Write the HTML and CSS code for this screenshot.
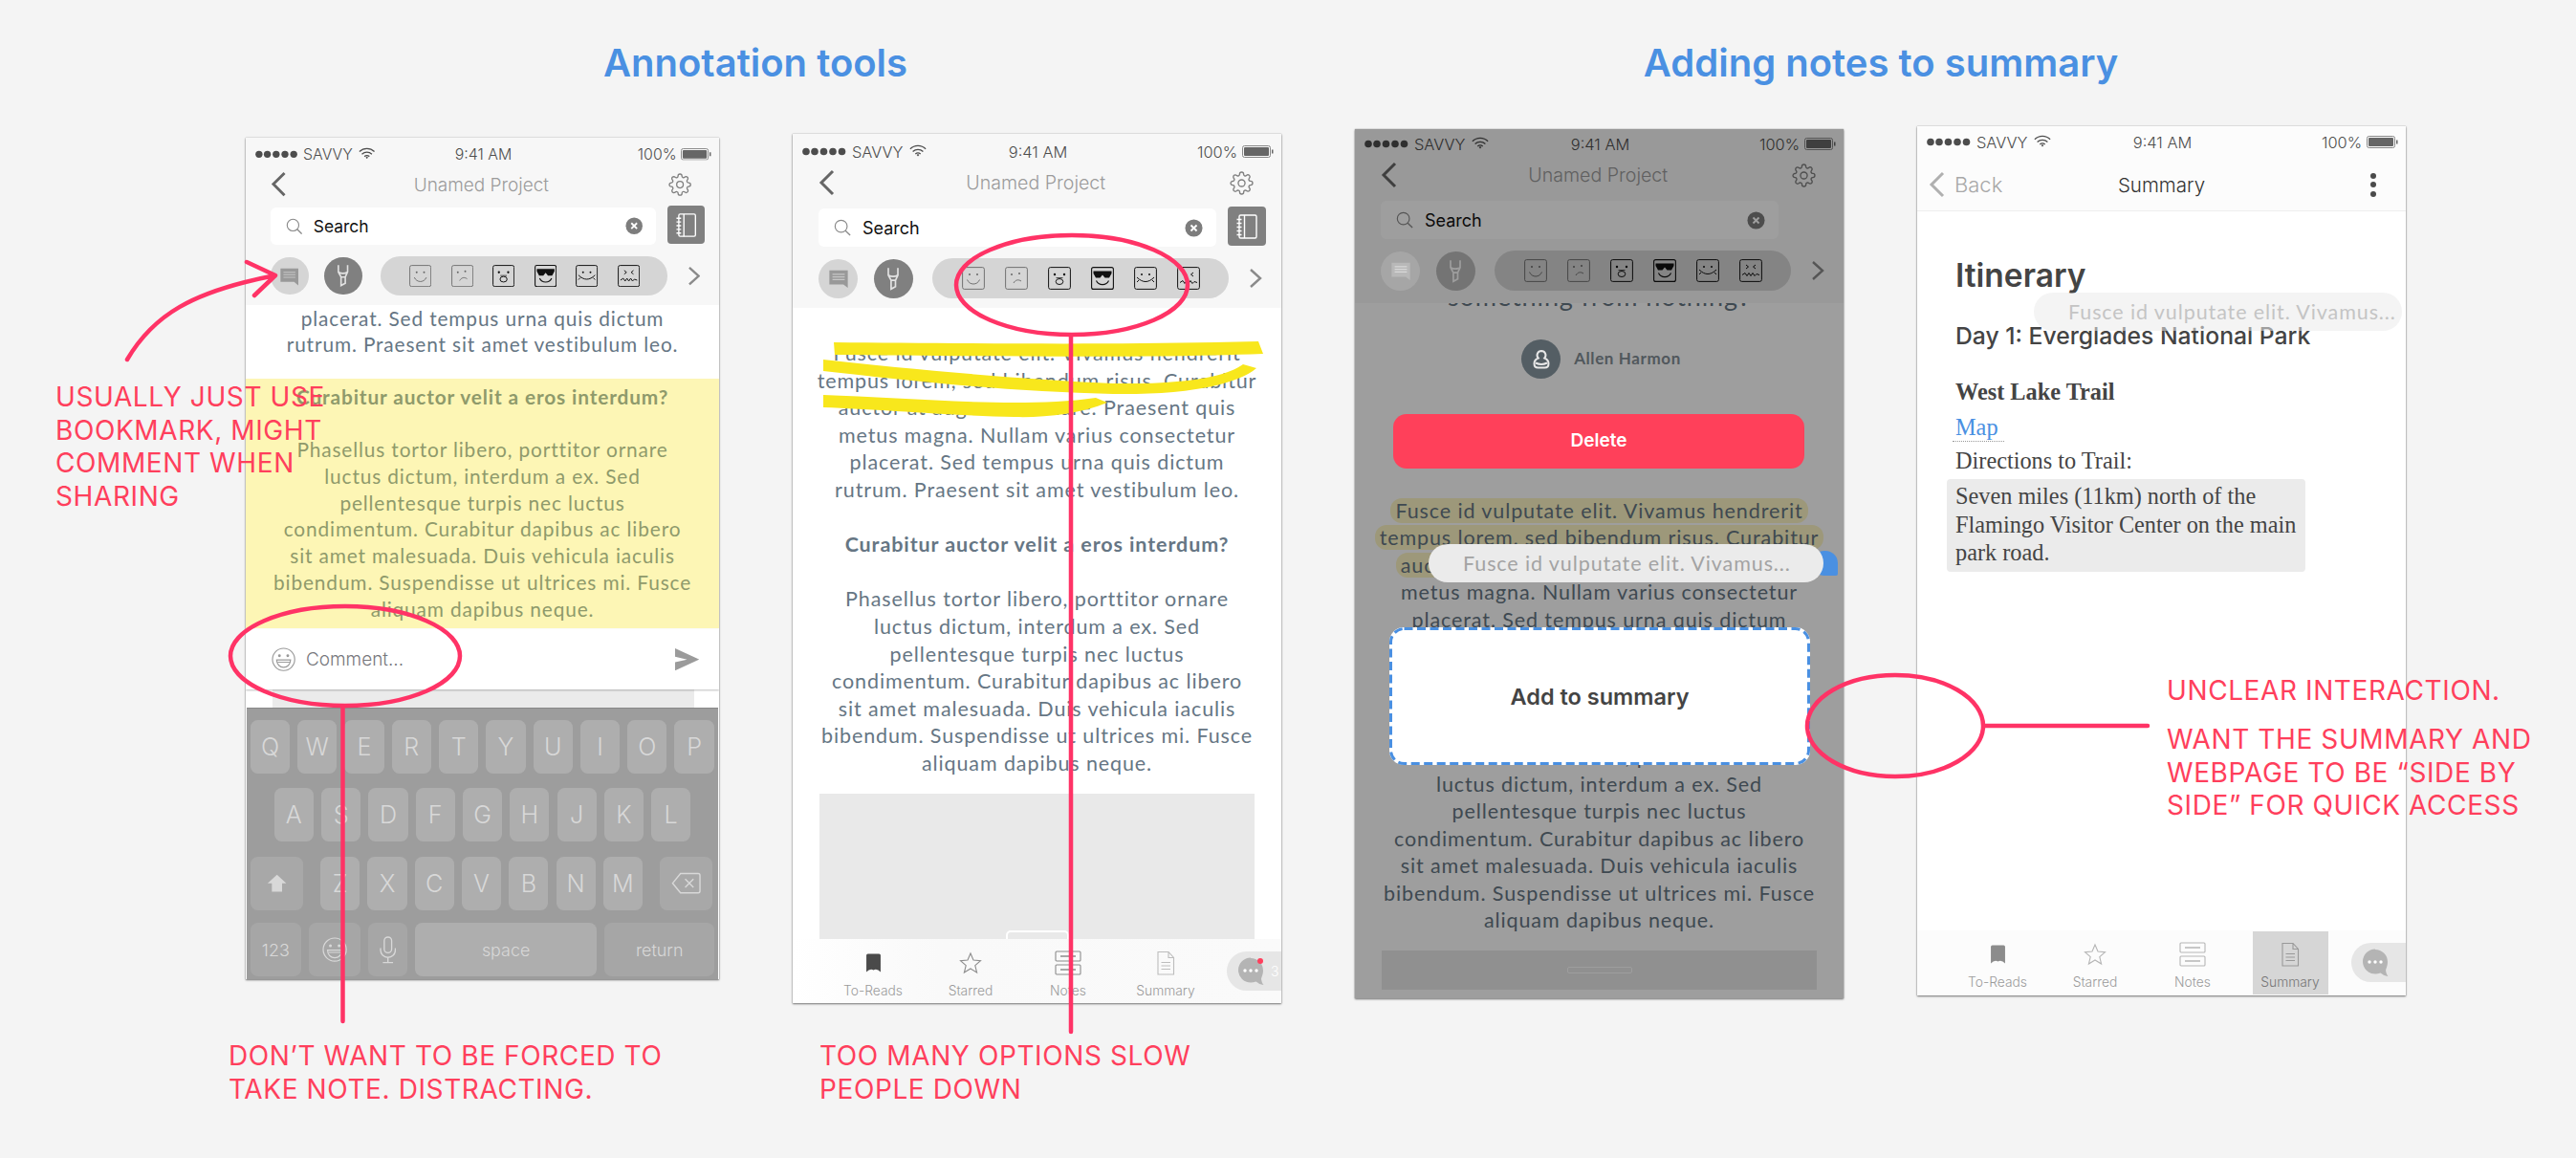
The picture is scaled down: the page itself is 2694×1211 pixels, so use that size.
FILE: index.html
```html
<!DOCTYPE html>
<html lang="en">
<head>
    <meta charset="UTF-8">
    <title>Annotation tools and adding notes to summary</title>
    <link rel="stylesheet" href="styles.css">
</head>
<body>

    <!-- icon sprite -->
    <svg class="sprite" xmlns="http://www.w3.org/2000/svg">
        <symbol id="i-dots" viewBox="0 0 46 9"><circle cx="4" cy="4.5" r="3.8"/><circle cx="13" cy="4.5" r="3.8"/><circle cx="22.5" cy="4.5" r="3.8"/><circle cx="32" cy="4.5" r="3.8"/><circle cx="41.5" cy="4.5" r="3.8"/></symbol>
        <symbol id="i-wifi" viewBox="0 0 20 14"><path d="M1 5c5-5 13-5 18 0M4 8c3.500-3 8.500-3 12 0M7 10.800c2-1.500 4-1.500 6 0" fill="none" stroke="currentColor" stroke-width="1.500"/><path d="M8.500 12l1.500-1 1.500 1-1.500 1.600z"/></symbol>
        <symbol id="i-battery" viewBox="0 0 33 13"><rect x=".5" y=".5" width="29" height="12" rx="2" fill="none" stroke="currentColor"/><rect x="2" y="2" width="26" height="9" rx="1"/><path d="M31 4.500h1.500v4H31z"/></symbol>
        <symbol id="i-back" viewBox="0 0 18 28"><path d="M15 2L3 14l12 12" fill="none" stroke="currentColor" stroke-width="3"/></symbol>
        <symbol id="i-next" viewBox="0 0 14 22"><path d="M2 2l10 9-10 9" fill="none" stroke="currentColor" stroke-width="2.400"/></symbol>
        <symbol id="i-gear" viewBox="0 0 24 24"><g fill="none" stroke="currentColor" stroke-width="1.300"><circle cx="12" cy="12" r="3.400"/><path d="M19.400 15a1.650 1.650 0 0 0 .33 1.820l.06.06a2 2 0 0 1 0 2.830 2 2 0 0 1-2.830 0l-.06-.06a1.650 1.650 0 0 0-1.820-.33 1.650 1.650 0 0 0-1 1.510V21a2 2 0 0 1-2 2 2 2 0 0 1-2-2v-.09A1.650 1.650 0 0 0 9 19.400a1.650 1.650 0 0 0-1.820.33l-.06.06a2 2 0 0 1-2.830 0 2 2 0 0 1 0-2.830l.06-.06a1.650 1.650 0 0 0 .33-1.820 1.650 1.650 0 0 0-1.510-1H3a2 2 0 0 1-2-2 2 2 0 0 1 2-2h.09A1.650 1.650 0 0 0 4.600 9a1.650 1.650 0 0 0-.33-1.820l-.06-.06a2 2 0 0 1 0-2.830 2 2 0 0 1 2.830 0l.06.06a1.650 1.650 0 0 0 1.820.33H9a1.650 1.650 0 0 0 1-1.510V3a2 2 0 0 1 2-2 2 2 0 0 1 2 2v.09a1.650 1.650 0 0 0 1 1.510 1.650 1.650 0 0 0 1.820-.33l.06-.06a2 2 0 0 1 2.830 0 2 2 0 0 1 0 2.830l-.06.06a1.650 1.650 0 0 0-.33 1.820V9a1.650 1.650 0 0 0 1.510 1H21a2 2 0 0 1 2 2 2 2 0 0 1-2 2h-.09a1.650 1.650 0 0 0-1.510 1z"/></g></symbol>
        <symbol id="i-search" viewBox="0 0 20 20"><circle cx="8.500" cy="8.500" r="7" fill="none" stroke="currentColor" stroke-width="1.300"/><path d="M13.500 13.500l5.500 5.500" fill="none" stroke="currentColor" stroke-width="1.500"/></symbol>
        <symbol id="i-clear" viewBox="0 0 20 20"><circle cx="10" cy="10" r="9.500"/><path d="M6.800 6.800l6.400 6.400M13.200 6.800l-6.400 6.400" stroke="#fff" stroke-width="2"/></symbol>
        <symbol id="i-notebook" viewBox="0 0 24 28"><g fill="none" stroke="currentColor" stroke-width="1.400"><rect x="4" y="2" width="18" height="24" rx="1.500"/><path d="M9.500 2v24M1.500 6.500h5M1.500 10.500h5M1.500 14.500h5M1.500 18.500h5M1.500 22.500h5"/></g></symbol>
        <symbol id="i-comment" viewBox="0 0 24 24"><path d="M1.500 3h21v20l-5-4h-16z"/><path d="M5 7.500h14M5 10.500h14M5 13.500h14" stroke="#fff" stroke-opacity=".45" stroke-width="1.200"/></symbol>
        <symbol id="i-marker" viewBox="0 0 24 30"><path d="M6 1.500v9l3.500 6.500v11l5.500-3v-8l3-6.500v-9M6 10.500c3.500 2 8.500 2 12 0M9.500 17h5.500" fill="none" stroke="currentColor" stroke-width="2"/></symbol>
        <symbol id="i-face1" viewBox="0 0 24 24"><g fill="none" stroke="currentColor" stroke-width=".9"><rect x=".6" y=".6" width="22.800" height="22.800" rx="2"/><path d="M5.500 13.500c2.500 6 10.500 6 13 0"/></g><circle cx="8" cy="8" r="1" fill="currentColor"/><circle cx="16" cy="8" r="1" fill="currentColor"/></symbol>
        <symbol id="i-face2" viewBox="0 0 24 24"><g fill="none" stroke="currentColor" stroke-width=".9"><rect x=".6" y=".6" width="22.800" height="22.800" rx="2"/><path d="M9 17c2-3.500 5-4 8-2"/></g><circle cx="7" cy="8" r="1" fill="currentColor"/><circle cx="15" cy="7" r="1" fill="currentColor"/></symbol>
        <symbol id="i-face3" viewBox="0 0 24 24"><g fill="none" stroke="currentColor" stroke-width="1"><rect x=".6" y=".6" width="22.800" height="22.800" rx="2"/><ellipse cx="12" cy="15.500" rx="3.800" ry="3"/><path d="M8.500 11.500h7" stroke-width=".7"/></g><circle cx="7" cy="8" r="1.200" fill="currentColor"/><circle cx="17" cy="8" r="1.200" fill="currentColor"/></symbol>
        <symbol id="i-face4" viewBox="0 0 24 24"><rect x=".6" y=".6" width="22.800" height="22.800" rx="2" fill="none" stroke="currentColor" stroke-width="1.100"/><path d="M2.500 4.500h19v2.500l-2.500 4.500h-4.500l-2.500-3-2.500 3h-4.500l-2.500-4.500z"/><path d="M5.500 14.500c2.500 5.500 10.500 5.500 13 0" fill="none" stroke="currentColor" stroke-width="1.100"/></symbol>
        <symbol id="i-face5" viewBox="0 0 24 24"><g fill="none" stroke="currentColor" stroke-width="1"><rect x=".6" y=".6" width="22.800" height="22.800" rx="2"/><path d="M3 11c3 3 6 4.500 9 4.500s6-1.500 9-4.500M5 14l-2 2M19 14l2 2"/></g><circle cx="8" cy="8" r="1" fill="currentColor"/><circle cx="16" cy="8" r="1" fill="currentColor"/></symbol>
        <symbol id="i-face6" viewBox="0 0 24 24"><g fill="none" stroke="currentColor" stroke-width="1"><rect x=".6" y=".6" width="22.800" height="22.800" rx="2"/><path d="M3 16.500l3-2 2 3 2-3 2 3 2-3 2 3 2-2 3 1M7 6l2.500 2-2.500 2M17 6l-2.500 2 2.500 2"/></g></symbol>
        <symbol id="i-emoji" viewBox="0 0 26 26"><circle cx="13" cy="13" r="12" fill="none" stroke="currentColor" stroke-width="1.200"/><circle cx="8.500" cy="9" r="1.500"/><circle cx="17.500" cy="9" r="1.500"/><path d="M5.500 13.500h15c0 5-3.500 8-7.500 8s-7.500-3-7.500-8z" fill="none" stroke="currentColor" stroke-width="1.200"/><path d="M6.500 16h13" stroke="currentColor"/></symbol>
        <symbol id="i-send" viewBox="0 0 26 24"><path d="M0 0l26 12L0 24v-9l13-3L0 9z"/></symbol>
        <symbol id="i-bookmark" viewBox="0 0 16 20"><path d="M1 2.500Q1 1 2.500 1h11Q15 1 15 2.500V19q-3.500-4-7-2-3.500-2-7 2z"/></symbol>
        <symbol id="i-star" viewBox="0 0 24 24"><path d="M12 2l3 7 7.500.6-5.700 5 1.800 7.400-6.600-4-6.600 4 1.800-7.400-5.700-5L9 9z" fill="none" stroke="currentColor" stroke-width="1.100"/></symbol>
        <symbol id="i-notes" viewBox="0 0 28 28"><g fill="none" stroke="currentColor" stroke-width="1.100"><rect x="1" y="2" width="26" height="10" rx="1"/><rect x="1" y="16" width="26" height="10" rx="1"/><path d="M6 7h16M6 21h16" stroke-width="1.600"/></g></symbol>
        <symbol id="i-doc" viewBox="0 0 20 26"><path d="M2 1.500h11l5.500 6V25H2zM13 1.500v6h5.500M5.500 12.500h9.500M5.500 16h9.500M5.500 19.500h9.500" fill="none" stroke="currentColor" stroke-width="1.100"/></symbol>
        <symbol id="i-chat" viewBox="0 0 28 30"><path d="M14 1a13 13 0 0 1 13 13c0 4-1.500 6.500-2 8.500.2 2.500 1.200 5 2.500 6.500-3.500-.5-6-2-8-3.500-1.700.7-3.500 1-5.500 1a13 13 0 0 1 0-26z"/><circle cx="8" cy="14" r="1.700" fill="#fff"/><circle cx="14" cy="14" r="1.700" fill="#fff"/><circle cx="20" cy="14" r="1.700" fill="#fff"/></symbol>
        <symbol id="i-person" viewBox="0 0 24 24"><path d="M12 3a4.500 4.500 0 0 1 3.300 7.500c2.500 1 4.200 3.200 4.200 5.800 0 2.700-1.800 4.200-4 4.200h-7c-2.200 0-4-1.500-4-4.200 0-2.600 1.700-4.800 4.200-5.800A4.500 4.500 0 0 1 12 3z" fill="none" stroke="currentColor" stroke-width="2"/><path d="M6 15.500c4 2 8 2 12 0" fill="none" stroke="currentColor" stroke-width="2"/></symbol>
        <symbol id="i-shift" viewBox="0 0 24 24"><path d="M12 2l11 10h-5v10H6V12H1z"/></symbol>
        <symbol id="i-del" viewBox="0 0 32 24"><path d="M10 1.500h19a2 2 0 0 1 2 2v17a2 2 0 0 1-2 2H10L1.500 12zM15 7.500l9 9M24 7.500l-9 9" fill="none" stroke="currentColor" stroke-width="1.500"/></symbol>
        <symbol id="i-mic" viewBox="0 0 18 30"><rect x="5" y="1" width="8" height="17" rx="4" fill="none" stroke="currentColor" stroke-width="1.400"/><path d="M1 13v2a8 8 0 0 0 16 0v-2M9 23v5M3.500 28.500h11" fill="none" stroke="currentColor" stroke-width="1.400"/></symbol>
    </svg>

    <h1 class="section-title title-a">Annotation tools</h1>
    <h1 class="section-title title-b">Adding notes to summary</h1>

    <!-- Phone 1: comment box with keyboard -->
    <section class="phone phone-keyboard">
        <header class="head">
            <div class="status">
                <div class="carrier"><svg class="dots"><use href="#i-dots"/></svg>SAVVY<svg class="wifi"><use href="#i-wifi"/></svg></div>
                <div class="clock">9:41 AM</div>
                <div class="power">100%<svg class="battery"><use href="#i-battery"/></svg></div>
            </div>
            <div class="nav">
                <svg class="back"><use href="#i-back"/></svg>
                <div class="nav-title">Unamed Project</div>
                <svg class="gear"><use href="#i-gear"/></svg>
            </div>
            <div class="search-row">
                <div class="search"><svg class="search-icon"><use href="#i-search"/></svg><span class="search-text">Search</span><svg class="clear"><use href="#i-clear"/></svg></div>
                <div class="notebook"><svg><use href="#i-notebook"/></svg></div>
            </div>
            <div class="tools">
                <div class="tool tool-comment"><svg><use href="#i-comment"/></svg></div>
                <div class="tool tool-marker"><svg><use href="#i-marker"/></svg></div>
                <div class="faces">
                    <svg class="face soft"><use href="#i-face1"/></svg>
                    <svg class="face soft"><use href="#i-face2"/></svg>
                    <svg class="face"><use href="#i-face3"/></svg>
                    <svg class="face"><use href="#i-face4"/></svg>
                    <svg class="face"><use href="#i-face5"/></svg>
                    <svg class="face"><use href="#i-face6"/></svg>
                </div>
                <svg class="next"><use href="#i-next"/></svg>
            </div>
        </header>
        <div class="article article-cut">
            placerat. Sed tempus urna quis dictum<br>
            rutrum. Praesent sit amet vestibulum leo.
            <div class="highlighted">
                <strong>Curabitur auctor velit a eros interdum?</strong><br><br>
                Phasellus tortor libero, porttitor ornare<br>
                luctus dictum, interdum a ex. Sed<br>
                pellentesque turpis nec luctus<br>
                condimentum. Curabitur dapibus ac libero<br>
                sit amet malesuada. Duis vehicula iaculis<br>
                bibendum. Suspendisse ut ultrices mi. Fusce<br>
                aliquam dapibus neque.
            </div>
        </div>
        <div class="comment-bar">
            <svg class="comment-emoji"><use href="#i-emoji"/></svg>
            <span class="comment-text">Comment...</span>
            <svg class="send"><use href="#i-send"/></svg>
        </div>
        <div class="comment-gap"><div></div></div>
        <div class="keyboard">
            <div class="key-row">
                <div class="key">Q</div><div class="key">W</div><div class="key">E</div><div class="key">R</div><div class="key">T</div><div class="key">Y</div><div class="key">U</div><div class="key">I</div><div class="key">O</div><div class="key">P</div>
            </div>
            <div class="key-row row-center">
                <div class="key">A</div><div class="key">S</div><div class="key">D</div><div class="key">F</div><div class="key">G</div><div class="key">H</div><div class="key">J</div><div class="key">K</div><div class="key">L</div>
            </div>
            <div class="key-row">
                <div class="key key-shift"><svg><use href="#i-shift"/></svg></div>
                <div class="key">Z</div><div class="key">X</div><div class="key">C</div><div class="key">V</div><div class="key">B</div><div class="key">N</div><div class="key">M</div>
                <div class="key key-del"><svg><use href="#i-del"/></svg></div>
            </div>
            <div class="key-row row-last">
                <div class="key key-small k123">123</div>
                <div class="key kemoji"><svg><use href="#i-emoji"/></svg></div>
                <div class="key kmic"><svg><use href="#i-mic"/></svg></div>
                <div class="key key-small kspace">space</div>
                <div class="key key-small kreturn">return</div>
            </div>
        </div>
    </section>

    <!-- Phone 2: highlight by scribble -->
    <section class="phone phone-read">
        <header class="head">
            <div class="status">
                <div class="carrier"><svg class="dots"><use href="#i-dots"/></svg>SAVVY<svg class="wifi"><use href="#i-wifi"/></svg></div>
                <div class="clock">9:41 AM</div>
                <div class="power">100%<svg class="battery"><use href="#i-battery"/></svg></div>
            </div>
            <div class="nav">
                <svg class="back"><use href="#i-back"/></svg>
                <div class="nav-title">Unamed Project</div>
                <svg class="gear"><use href="#i-gear"/></svg>
            </div>
            <div class="search-row">
                <div class="search"><svg class="search-icon"><use href="#i-search"/></svg><span class="search-text">Search</span><svg class="clear"><use href="#i-clear"/></svg></div>
                <div class="notebook"><svg><use href="#i-notebook"/></svg></div>
            </div>
            <div class="tools">
                <div class="tool tool-comment"><svg><use href="#i-comment"/></svg></div>
                <div class="tool tool-marker"><svg><use href="#i-marker"/></svg></div>
                <div class="faces">
                    <svg class="face soft"><use href="#i-face1"/></svg>
                    <svg class="face soft"><use href="#i-face2"/></svg>
                    <svg class="face"><use href="#i-face3"/></svg>
                    <svg class="face"><use href="#i-face4"/></svg>
                    <svg class="face"><use href="#i-face5"/></svg>
                    <svg class="face"><use href="#i-face6"/></svg>
                </div>
                <svg class="next"><use href="#i-next"/></svg>
            </div>
        </header>
        <div class="article article-top">
            Fusce id vulputate elit. Vivamus hendrerit<br>
            tempus lorem, sed bibendum risus. Curabitur<br>
            auctor at augue eu ornare. Praesent quis<br>
            metus magna. Nullam varius consectetur<br>
            placerat. Sed tempus urna quis dictum<br>
            rutrum. Praesent sit amet vestibulum leo.<br><br>
            <strong>Curabitur auctor velit a eros interdum?</strong><br><br>
            Phasellus tortor libero, porttitor ornare<br>
            luctus dictum, interdum a ex. Sed<br>
            pellentesque turpis nec luctus<br>
            condimentum. Curabitur dapibus ac libero<br>
            sit amet malesuada. Duis vehicula iaculis<br>
            bibendum. Suspendisse ut ultrices mi. Fusce<br>
            aliquam dapibus neque.
            <div class="picture"><div class="picture-chip"></div></div>
        </div>
        <footer class="tabbar">
            <div class="tab tab-on"><svg class="tab-bookmark"><use href="#i-bookmark"/></svg><span>To-Reads</span></div>
            <div class="tab"><svg class="tab-star"><use href="#i-star"/></svg><span>Starred</span></div>
            <div class="tab"><svg class="tab-notes"><use href="#i-notes"/></svg><span>Notes</span></div>
            <div class="tab tab-pale"><svg class="tab-doc"><use href="#i-doc"/></svg><span>Summary</span></div>
            <div class="chat-pill"><svg><use href="#i-chat"/></svg><i class="badge"></i><b>3</b></div>
        </footer>
    </section>

    <!-- Phone 3: dimmed page with drop target -->
    <section class="phone phone-dim">
        <header class="head">
            <div class="status">
                <div class="carrier"><svg class="dots"><use href="#i-dots"/></svg>SAVVY<svg class="wifi"><use href="#i-wifi"/></svg></div>
                <div class="clock">9:41 AM</div>
                <div class="power">100%<svg class="battery"><use href="#i-battery"/></svg></div>
            </div>
            <div class="nav">
                <svg class="back"><use href="#i-back"/></svg>
                <div class="nav-title">Unamed Project</div>
                <svg class="gear"><use href="#i-gear"/></svg>
            </div>
            <div class="search-row">
                <div class="search"><svg class="search-icon"><use href="#i-search"/></svg><span class="search-text">Search</span><svg class="clear"><use href="#i-clear"/></svg></div>
                <div class="notebook"></div>
            </div>
            <div class="tools">
                <div class="tool tool-comment"><svg><use href="#i-comment"/></svg></div>
                <div class="tool tool-marker"><svg><use href="#i-marker"/></svg></div>
                <div class="faces">
                    <svg class="face soft"><use href="#i-face1"/></svg>
                    <svg class="face soft"><use href="#i-face2"/></svg>
                    <svg class="face"><use href="#i-face3"/></svg>
                    <svg class="face"><use href="#i-face4"/></svg>
                    <svg class="face"><use href="#i-face5"/></svg>
                    <svg class="face"><use href="#i-face6"/></svg>
                </div>
                <svg class="next"><use href="#i-next"/></svg>
            </div>
        </header>
        <div class="article article-dim">
            <div class="lead">something from nothing?</div>
            <div class="author"><div class="avatar"><svg><use href="#i-person"/></svg></div><span>Allen Harmon</span></div>
            <div class="delete-btn">Delete</div>
            <span class="mark">Fusce id vulputate elit. Vivamus hendrerit<br>
            tempus lorem, sed bibendum risus. Curabitur<br>
            auctor at augue eu ornare.</span> Praesent quis<br>
            metus magna. Nullam varius consectetur<br>
            placerat. Sed tempus urna quis dictum<br>
            rutrum. Praesent sit amet vestibulum leo.<br><br>
            <strong>Curabitur auctor velit a eros interdum?</strong><br><br>
            Phasellus tortor libero, porttitor ornare<br>
            luctus dictum, interdum a ex. Sed<br>
            pellentesque turpis nec luctus<br>
            condimentum. Curabitur dapibus ac libero<br>
            sit amet malesuada. Duis vehicula iaculis<br>
            bibendum. Suspendisse ut ultrices mi. Fusce<br>
            aliquam dapibus neque.
            <div class="picture picture-dim"><div class="picture-chip"></div></div>
        </div>
        <div class="dim"></div>
        <div class="peek"></div>
        <div class="drag-pill">Fusce id vulputate elit. Vivamus...</div>
        <div class="drop-zone">
            <svg class="dashes" viewBox="0 0 440 144"><rect x="1.500" y="1.500" width="437" height="141" rx="14"/></svg>
            Add to summary
        </div>
    </section>

    <!-- Phone 4: summary -->
    <section class="phone phone-summary">
        <header class="head-summary">
            <div class="status">
                <div class="carrier"><svg class="dots"><use href="#i-dots"/></svg>SAVVY<svg class="wifi"><use href="#i-wifi"/></svg></div>
                <div class="clock">9:41 AM</div>
                <div class="power">100%<svg class="battery"><use href="#i-battery"/></svg></div>
            </div>
            <div class="nav-summary">
                <div class="back-link"><svg class="back"><use href="#i-back"/></svg>Back</div>
                <div class="nav-name">Summary</div>
                <div class="menu"><i></i><i></i><i></i></div>
            </div>
        </header>
        <div class="doc">
            <h2>Itinerary</h2>
            <h3>Day 1: Everglades National Park</h3>
            <h4>West Lake Trail</h4>
            <a class="map-link">Map</a>
            <p class="directions">Directions to Trail:</p>
            <p class="note">Seven miles (11km) north of the<br>Flamingo Visitor Center on the main<br>park road.</p>
        </div>
        <div class="ghost-pill">Fusce id vulputate elit. Vivamus...</div>
        <footer class="tabbar tabbar-summary">
            <div class="tab tab-bm"><svg class="tab-bookmark"><use href="#i-bookmark"/></svg><span>To-Reads</span></div>
            <div class="tab"><svg class="tab-star"><use href="#i-star"/></svg><span>Starred</span></div>
            <div class="tab"><svg class="tab-notes"><use href="#i-notes"/></svg><span>Notes</span></div>
            <div class="tab tab-current"><svg class="tab-doc"><use href="#i-doc"/></svg><span>Summary</span></div>
            <div class="chat-pill"><svg><use href="#i-chat"/></svg></div>
        </footer>
    </section>

    <!-- Marker strokes and callouts drawn over the mockups -->
    <svg class="marks" xmlns="http://www.w3.org/2000/svg" viewBox="0 0 2694 1211">
        <g class="scribble">
            <path d="M872 358C1000 359 1180 361 1316 357L1321 370C1180 375 1000 372 873 371z"/>
            <path d="M861 376C950 386 1060 396 1164 401C1230 402 1280 396 1300 381L1314 385C1290 405 1230 413 1164 412C1060 410 950 398 861 388z"/>
            <path d="M861 413C920 415 1000 421 1061 421C1090 421 1120 420 1146 416L1158 421C1130 433 1090 437 1061 436C1000 435 920 428 861 426z"/>
        </g>
        <g class="pen">
            <path d="M133 376C160 330 200 305 288 288M258 274L288 288L266 309"/>
            <ellipse cx="361" cy="686" rx="120" ry="52"/>
            <path d="M358.500 739V1068"/>
            <ellipse cx="1121" cy="298" rx="121" ry="52"/>
            <path d="M1120 351V1079"/>
            <ellipse cx="1982" cy="759" rx="92" ry="53"/>
            <path d="M2075 759H2246"/>
        </g>
    </svg>

    <p class="callout c-bookmark">USUALLY JUST USE<br>BOOKMARK, MIGHT<br>COMMENT WHEN<br>SHARING</p>
    <p class="callout c-forced">DON’T WANT TO BE FORCED TO<br>TAKE NOTE. DISTRACTING.</p>
    <p class="callout c-options">TOO MANY OPTIONS SLOW<br>PEOPLE DOWN</p>
    <p class="callout c-unclear">UNCLEAR INTERACTION.</p>
    <p class="callout c-side">WANT THE SUMMARY AND<br>WEBPAGE TO BE “SIDE BY<br>SIDE” FOR QUICK ACCESS</p>

</body>
</html>
```
FILE: styles.css
```css
* {
    box-sizing: border-box;
}

body {
    margin: 0;
    width: 2694px;
    height: 1211px;
    position: relative;
    overflow: hidden;
    background-color: #f4f4f4;
    font-family: Inter, "Liberation Sans", sans-serif;
}

.sprite {
    position: absolute;
    width: 0;
    height: 0;
}

/* --- Canvas pieces --- */
.section-title {
    position: absolute;
    top: 43px;
    margin: 0;
    font-size: 40px;
    line-height: 46px;
    font-weight: 600;
    color: #4a90e2;
    white-space: nowrap;
    transform: translateX(-50%);
}
.title-a { left: 790px; }
.title-b { left: 1967px; }

.callout {
    position: absolute;
    margin: 0;
    font-size: 28px;
    line-height: 34.5px;
    color: #ff3f5c;
    white-space: nowrap;
    letter-spacing: .6px;
}
.c-bookmark { left: 58px; top: 398px; }
.c-forced { left: 239px; top: 1087px; }
.c-options { left: 857px; top: 1087px; }
.c-unclear { left: 2266px; top: 705px; }
.c-side { left: 2266px; top: 756px; }

.marks {
    position: absolute;
    left: 0;
    top: 0;
    width: 2694px;
    height: 1211px;
    pointer-events: none;
}
.scribble path { fill: #f8e71c; }
.pen * {
    fill: none;
    stroke: #ff3366;
    stroke-width: 4.5;
    stroke-linecap: round;
    stroke-linejoin: round;
}

/* --- Phone frame, designed at 511 x 909 --- */
.phone {
    position: absolute;
    width: 511px;
    height: 909px;
    background-color: #fff;
    overflow: hidden;
    display: flex;
    flex-direction: column;
    isolation: isolate;
    box-shadow: 0 1px 2px rgba(0, 0, 0, .5), 0 0 1px rgba(0, 0, 0, .35);
}
/* first phone is a bit smaller on the board; left/top are in zoomed px */
.phone-keyboard { zoom: .969; left: 265.2px; top: 148.2px; }
.phone-read { left: 829px; top: 140px; }
.phone-dim { left: 1417px; top: 135px; }
.phone-summary { left: 2005px; top: 132px; }

.head {
    flex: none;
    height: 182px;
    background-color: #f7f7f7;
    position: relative;
    z-index: 1;
}

.status {
    height: 37px;
    padding: 0 8px 0 10px;
    display: grid;
    grid-template-columns: 1fr auto 1fr;
    align-items: center;
    font-size: 16.4px;
    font-weight: 300;
    color: #4d4d4d;
}
.carrier { display: flex; align-items: center; }
.power { display: flex; align-items: center; justify-content: flex-end; }
.dots { width: 46px; height: 9px; margin-right: 6px; fill: #4d4d4d; }
.wifi { width: 18px; height: 13px; margin-left: 6px; margin-top: -3px; fill: #4d4d4d; }
.battery { width: 33px; height: 13px; margin-left: 5px; fill: #666; color: #888; }

.nav {
    height: 28px;
    padding: 0 29.500px 0 27px;
    display: grid;
    grid-template-columns: 1fr auto 1fr;
    align-items: center;
}
.back { width: 18px; height: 28px; color: #666; }
.gear { width: 25px; height: 25px; color: #7f7f7f; justify-self: end; }
.nav-title { font-size: 19.600px; font-weight: 300; color: #9b9b9b; }

.search-row {
    margin: 13px 16px 0 27px;
    display: flex;
    gap: 12px;
}
.phone-keyboard .search-row { margin-top: 11px; }
.phone-keyboard .tools { margin-top: 12.600px; }
.search {
    flex: 1;
    height: 40px;
    padding: 0 14px 0 16px;
    background-color: #fff;
    border-radius: 6px;
    display: flex;
    align-items: center;
}
.search-icon { width: 18px; height: 18px; color: #8a8a8a; }
.search-text { margin-left: 12px; font-size: 18px; color: #111; flex: 1; }
.clear { width: 19px; height: 19px; fill: #7d7d7d; }
.notebook {
    width: 40px;
    height: 41px;
    margin-top: -2px;
    background-color: #808080;
    border-radius: 4px;
    display: flex;
    align-items: center;
    justify-content: center;
    color: #fff;
}
.notebook svg { width: 24px; height: 28px; }

.tools {
    margin: 12px 0 0 27px;
    display: flex;
    align-items: center;
}
.tool {
    width: 41px;
    height: 41px;
    border-radius: 50%;
    display: flex;
    align-items: center;
    justify-content: center;
}
.tool-comment { background-color: #d5d5d5; fill: #999; }
.tool-comment svg { width: 22px; height: 22px; }
.tool-marker {
    margin-left: 16.500px;
    background-color: #808080;
    color: #e2e2e2;
}
.tool-marker svg { width: 20px; height: 27px; }
.faces {
    width: 310px;
    height: 42px;
    margin-left: 20px;
    padding-left: 31px;
    background-color: #d5d5d5;
    border-radius: 21px;
    display: flex;
    align-items: center;
    gap: 21px;
}
.face { width: 24px; height: 24px; color: #111; fill: #111; }
.face.soft { color: #666; fill: #666; }
.next { width: 14px; height: 22px; margin-left: 21px; color: #8a8a8a; }

/* --- Article text --- */
.article {
    flex: none;
    font-family: Lato, "Open Sans", sans-serif;
    font-size: 21.500px;
    line-height: 28.600px;
    color: #667684;
    text-align: center;
    white-space: nowrap;
    letter-spacing: .9px;
}
.article-cut { height: 350px; overflow: hidden; }
.phone-keyboard .head { height: 180.600px; }
.article-top { padding-top: 33px; }

.highlighted {
    margin-top: 22.700px;
    padding: 5px 0 7px;
    background-color: #fdf6b5;
    color: #8f9a6b;
}

.picture {
    height: 320px;
    margin: 17px 28px 0;
    background-color: #e9e9e9;
    display: flex;
    align-items: center;
    justify-content: center;
}
.picture-chip {
    width: 66px;
    height: 34px;
    border: 2px solid #fff;
    border-radius: 5px;
}
.picture-dim { height: 41px; margin-top: 17px; }
.picture-dim .picture-chip { width: 68px; height: 7px; border-width: 1px; border-radius: 2px; }

/* --- Comment bar and keyboard --- */
.comment-bar {
    flex: none;
    height: 65.500px;
    padding: 0 22px 0 28px;
    display: flex;
    align-items: center;
    background-color: #fff;
    box-shadow: 0 1px 2px rgba(0, 0, 0, .25);
    position: relative;
}
.comment-emoji { width: 26px; height: 26px; color: #999; fill: #999; }
.comment-text { flex: 1; margin-left: 11px; font-size: 19.600px; font-weight: 300; color: #77777c; }
.send { width: 26px; height: 24px; fill: #9b9b9b; }
.comment-gap { flex: none; height: 19px; padding: 0 27px 0 29px; }
.comment-gap div { height: 19px; background-color: #ebebeb; }

.keyboard {
    flex: 1;
    margin: 0 1px;
    padding: 13.400px 4px 0;
    background-color: #9d9d9d;
    box-shadow: inset 0 1px 0 rgba(0, 0, 0, .12);
}
.key-row {
    display: flex;
    gap: 8.300px;
    margin-bottom: 16px;
}
.row-center { justify-content: center; }
.row-last { margin-bottom: 0; margin-top: -2.500px; }
.key {
    width: 42.600px;
    height: 58px;
    flex: none;
    background-color: #aeaeae;
    border-radius: 8px;
    display: flex;
    align-items: center;
    justify-content: center;
    font-size: 26px;
    font-weight: 300;
    color: #d8d8d8;
}
.key svg { color: #d8d8d8; fill: #d8d8d8; }
.key-shift { width: 57px; margin-right: 10.300px; background-color: #a8a8a8; }
.key-shift svg { width: 22px; height: 22px; }
.key-del { width: 57px; margin-left: 10.300px; background-color: #a8a8a8; }
.key-del svg { width: 32px; height: 24px; fill: none; }
.key-small { font-size: 18.500px; }
.k123 { width: 54.700px; background-color: #a6a6a6; }
.kemoji { width: 55.700px; background-color: #a6a6a6; }
.kemoji svg { width: 27px; height: 27px; }
.kmic { background-color: #a6a6a6; }
.kmic svg { width: 18px; height: 30px; fill: none; }
.kspace { width: 196px; }
.kreturn { width: 119px; background-color: #a6a6a6; }

/* --- Tab bar --- */
.tabbar {
    position: absolute;
    left: 0;
    right: 0;
    bottom: 0;
    height: 67px;
    padding-left: 33px;
    display: flex;
    background: linear-gradient(90deg, #fff, #f9f9f9 30%, #fafafa);
}
.tab {
    width: 102px;
    padding-top: 11px;
    display: flex;
    flex-direction: column;
    align-items: center;
    font-size: 13.800px;
    font-weight: 300;
    color: #9b9b9b;
}
.tab svg { height: 28px; color: #8c8c8c; }
.tab span { margin-top: 7px; line-height: 17px; }
.tab-bookmark { width: 17px; fill: #4a4a4a; }
.tab-star { width: 24px; }
.tab-notes { width: 28px; color: #8c8c8c; }
.tab-doc { width: 20px; }
.tab svg.tab-doc { color: #bdbdbd; }
.chat-pill {
    width: 57px;
    height: 41px;
    margin: 13px 0 0 auto;
    padding-left: 11px;
    background-color: #e6e6e6;
    border-radius: 21px 0 0 21px;
    display: flex;
    align-items: center;
    position: relative;
    fill: #b4b4b4;
}
.chat-pill svg { width: 28px; height: 30px; }
.chat-pill b { margin-left: 7px; font-size: 14px; font-weight: 300; color: #fff; }
.badge {
    position: absolute;
    left: 32px;
    top: 7px;
    width: 6px;
    height: 6px;
    border-radius: 50%;
    background-color: #ff3f5c;
}

/* --- Dimmed phone --- */
.phone-dim .head { z-index: auto; }
.phone-dim .status { margin-top: -3px; }
.phone-dim .notebook { visibility: hidden; }
.phone-dim .tool-comment {
    position: relative;
    z-index: 3;
    background-color: #a6a6a6;
    fill: #b8b8b8;
}
.phone-dim .tool-marker { background-color: #bcbcbc; color: #fff; }
.dim {
    position: absolute;
    left: 0;
    top: 0;
    right: 0;
    bottom: 0;
    background-color: rgba(0, 0, 0, .38);
    z-index: 2;
}
.article-dim { margin-top: -3px; }
.lead {
    margin-top: -21px;
    font-size: 27px;
    line-height: 34px;
}
.author {
    margin-top: 28.600px;
    height: 40px;
    display: flex;
    align-items: center;
    justify-content: center;
    padding-left: 4px;
    font-size: 17px;
    font-weight: 700;
    letter-spacing: .6px;
    color: #848e96;
}
.avatar {
    width: 41px;
    height: 41px;
    margin-right: 14px;
    background-color: #545e64;
    border-radius: 50%;
    display: flex;
    align-items: center;
    justify-content: center;
    color: #e8e8e8;
    position: relative;
    z-index: 3;
}
.avatar svg { width: 24px; height: 24px; }
.delete-btn {
    height: 57px;
    margin: 37.400px 41px 29.600px 40px;
    background-color: #ff405a;
    border-radius: 14px;
    display: flex;
    align-items: center;
    justify-content: center;
    font-family: Inter, sans-serif;
    font-size: 19px;
    font-weight: 600;
    letter-spacing: 0;
    color: #fff;
    position: relative;
    z-index: 3;
}
.mark {
    background-color: #fdf6c5;
    border-radius: 12px;
    padding: 0 5px;
    -webkit-box-decoration-break: clone;
    box-decoration-break: clone;
}
.peek {
    position: absolute;
    left: 478px;
    top: 441px;
    width: 27px;
    height: 26px;
    background-color: #4a90e2;
    border-radius: 13px 13px 2px 13px;
    z-index: 3;
}
.drag-pill {
    position: absolute;
    left: 77px;
    top: 434px;
    width: 413px;
    height: 40px;
    padding-left: 36px;
    background-color: #ebebeb;
    border-radius: 20px;
    font-family: Lato, sans-serif;
    font-size: 21.500px;
    line-height: 40px;
    letter-spacing: .9px;
    color: #a3a3a3;
    white-space: nowrap;
    z-index: 3;
}
.drop-zone {
    position: absolute;
    left: 36px;
    top: 521px;
    width: 440px;
    height: 144px;
    background-color: #fff;
    border-radius: 15px;
    display: flex;
    align-items: center;
    justify-content: center;
    font-size: 23.500px;
    font-weight: 600;
    color: #444;
    z-index: 3;
}
.dashes {
    position: absolute;
    left: 0;
    top: 0;
    width: 440px;
    height: 144px;
}
.dashes rect {
    fill: none;
    stroke: #4a90e2;
    stroke-width: 3;
    stroke-dasharray: 9 4.500;
}

/* --- Summary phone --- */
.head-summary {
    flex: none;
    height: 89px;
    background-color: #fcfcfc;
    border-bottom: 1px solid #eee;
}
.phone-summary .status { margin-top: -2px; }
.nav-summary {
    height: 52px;
    padding: 0 12px;
    display: grid;
    grid-template-columns: 1fr auto 1fr;
    align-items: center;
}
.back-link {
    display: flex;
    align-items: center;
    font-size: 22px;
    font-weight: 300;
    color: #a8a8a8;
}
.back-link .back { color: #b0b0b0; margin-right: 9px; }
.nav-name { font-size: 20.500px; font-weight: 300; color: #333; }
.menu {
    justify-self: end;
    margin-right: 19px;
    display: flex;
    flex-direction: column;
    gap: 3.500px;
}
.menu i {
    display: block;
    width: 6px;
    height: 6px;
    border-radius: 50%;
    background-color: #4a4a4a;
}
.doc { padding-left: 40px; color: #444; }
.doc h2 {
    margin: 48px 0 0;
    font-size: 33.500px;
    line-height: 38px;
    font-weight: 600;
}
.doc h3 {
    margin: 29px 0 0;
    font-size: 24.700px;
    line-height: 30px;
    font-weight: 500;
}
.doc h4, .map-link, .doc p {
    font-family: "Liberation Serif", serif;
    font-size: 24.300px;
    line-height: 28px;
}
.doc h4 { margin: 30px 0 0; font-weight: 700; }
.map-link {
    display: table;
    margin: 9px 0 6px -3px;
    padding: 0 6px 0 3px;
    color: #4a90e2;
    border-bottom: 1px dotted #999;
}
.directions { margin: 0; }
.note {
    width: 375px;
    margin: 5px 0 0 -9px;
    padding: 3px 9px 0;
    height: 97.300px;
    background-color: #ebebeb;
    border-radius: 4px;
    line-height: 29.700px !important;
}
.ghost-pill {
    position: absolute;
    left: 122px;
    top: 174px;
    width: 385px;
    height: 40px;
    padding-left: 36px;
    background-color: rgba(235, 235, 235, .55);
    border-radius: 20px;
    font-family: Lato, sans-serif;
    font-size: 21.500px;
    line-height: 40px;
    letter-spacing: .9px;
    color: #c4c4c4;
    white-space: nowrap;
}
.tabbar-summary { height: 68px; background: #fcfcfc; }
.tabbar-summary .tab svg { color: #b5b5b5; }
.tab-bm .tab-bookmark { fill: #8c8c8c; }
.tab-current { background-color: #d6d6d6; margin: 1px 11.500px; width: 79px; padding-top: 10px; color: #777; }
.tabbar-summary .tab-current svg { color: #999; }
```
